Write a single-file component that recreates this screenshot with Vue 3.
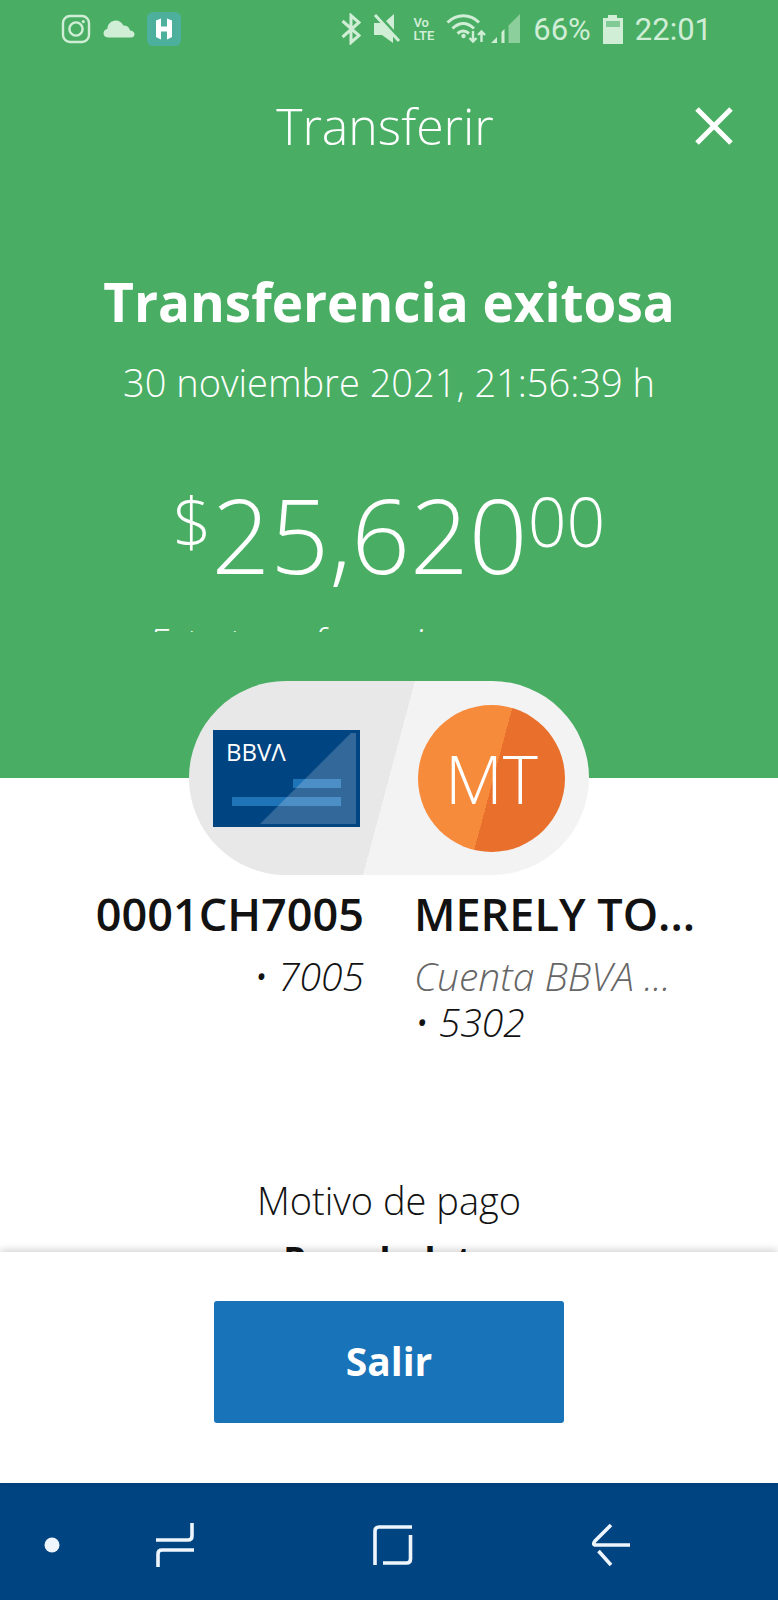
<script setup>
import { ref } from 'vue'

const transfer = ref({
  title: 'Transferencia exitosa',
  date: '30 noviembre 2021, 21:56:39 h',
  whole: '25,620',
  cents: '00',
  from: { name: '0001CH7005', account: '• 7005' },
  to: { name: 'MERELY TO...', bank: 'Cuenta BBVA ...', account: '• 5302', initials: 'MT' },
  reason: 'Pago boleto',
})
</script>

<template>
  <div class="screen">
    <div class="hero">
      <div class="status">
        <div class="status-left">
          <svg width="30" height="30" viewBox="0 0 30 30" fill="none" stroke="currentColor" stroke-width="2.400">
            <rect x="2" y="2" width="26" height="26" rx="7" />
            <circle cx="15" cy="15" r="6.600" />
            <circle cx="22.300" cy="7.600" r="1.600" fill="currentColor" stroke="none" />
          </svg>
          <svg width="32" height="20" viewBox="0 0 32 20" fill="currentColor">
            <path d="M5 18.500C2 18.500 .5 16.500 .5 14.300C.5 12 2 10.300 4.300 10C4.600 5 8.300 1.500 12.700 1.500C16.500 1.500 19 3.600 20.300 6.600C24 6 26.400 8.300 27 11.400C29.800 11.600 31.500 13 31.500 15.200C31.500 17.200 30 18.500 28 18.500Z" />
          </svg>
          <svg width="34" height="34" viewBox="0 0 34 34">
            <rect width="34" height="34" rx="6" fill="#4cb09c" />
            <path d="M9 8.500L14 6.500V14.500H20V6.500L25 8.500V25L20 27.500V19.500H14V27.500L9 25Z" fill="#fff" />
          </svg>
        </div>
        <div class="status-right">
          <svg width="20" height="32" viewBox="0 0 20 32" fill="none" stroke="currentColor" stroke-width="3">
            <path d="M1.500 8L18 22.500L10 29.500V2.500L18 9.500L1.500 24" />
          </svg>
          <svg width="28" height="32" viewBox="0 0 28 32">
            <path d="M1 10H8L20 22V30L9 22H1ZM13 8L21 1V17Z" fill="currentColor" />
            <path d="M2 2L26 28" stroke="currentColor" stroke-width="3" />
          </svg>
          <div class="volte"><span>Vo</span><span>LTE</span></div>
          <svg width="75" height="32" viewBox="0 0 75 32" fill="none" stroke="currentColor" stroke-width="3">
            <path d="M1.500 9.500C11 .5 24 .5 33 9.500M6.500 15.500C13.500 9 21 9 28 15.500M11.500 20.500C15.500 17 19 17 23 20.500" />
            <circle cx="17.500" cy="23" r="2.200" fill="currentColor" stroke="none" />
            <path d="M27 18V28M23.500 25L27 28.500L30.500 25M35.500 29V19M32 22L35.500 18.500L39 22" stroke-width="2.400" />
            <path d="M45 30L51 24V30ZM55.500 19L58.500 16V30H55.500Z" fill="currentColor" stroke="none" />
            <path d="M62.500 12.500L74 1V30H62.500Z" fill="currentColor" stroke="none" opacity=".5" />
          </svg>
          <span>66%</span>
          <svg width="20" height="30" viewBox="0 0 20 30" fill="currentColor">
            <path d="M0 4H5V1H14V4H20V30H0Z" />
            <rect x="3" y="7" width="14" height="6" fill="#82ca95" />
          </svg>
          <span>22:01</span>
        </div>
      </div>

      <header class="bar">
        <h1>Transferir</h1>
        <button class="close" aria-label="Cerrar">
          <svg width="40" height="40" viewBox="0 0 40 40" fill="none" stroke="currentColor" stroke-width="5">
            <path d="M3 3L37 37M37 3L3 37" />
          </svg>
        </button>
      </header>

      <section class="summary">
        <h2>{{ transfer.title }}</h2>
        <p class="date">{{ transfer.date }}</p>
        <p class="amount">
          <span class="small">$</span><span>{{ transfer.whole }}</span><span class="small">{{ transfer.cents }}</span>
        </p>
        <p class="note">Esta transferencia</p>
      </section>
    </div>

    <main class="details">
      <div class="pill">
        <svg width="147" height="97" viewBox="0 0 147 97">
          <rect width="147" height="97" fill="#004481" />
          <rect x="80" y="49" width="48" height="9" fill="#1f74b8" />
          <rect x="19" y="67" width="109" height="9" fill="#1f74b8" />
          <path d="M47 94L138 3H143V94Z" fill="#fff" opacity=".2" />
          <text x="13" y="31" class="brand">BBVΛ</text>
        </svg>
        <div class="avatar">{{ transfer.to.initials }}</div>
      </div>

      <div class="parties">
        <div class="party from">
          <strong>{{ transfer.from.name }}</strong>
          <em>{{ transfer.from.account }}</em>
        </div>
        <div class="party">
          <strong>{{ transfer.to.name }}</strong>
          <em class="bank">{{ transfer.to.bank }}</em>
          <em>{{ transfer.to.account }}</em>
        </div>
      </div>

      <div class="reason">
        <p>Motivo de pago</p>
        <strong>{{ transfer.reason }}</strong>
      </div>
    </main>

    <footer class="actions">
      <button class="exit">Salir</button>
    </footer>

    <nav class="nav">
      <button aria-label="Ocultar barra">
        <svg width="16" height="16" viewBox="0 0 16 16"><circle cx="8" cy="8" r="7.500" fill="currentColor" /></svg>
      </button>
      <button aria-label="Recientes">
        <svg width="38" height="44" viewBox="0 0 38 44" fill="none" stroke="currentColor" stroke-width="3.600">
          <path d="M36 0V13Q36 17 32 17H0M2 44V31Q2 27 6 27H38" />
        </svg>
      </button>
      <button aria-label="Inicio">
        <svg width="40" height="42" viewBox="0 0 40 42" fill="none" stroke="currentColor" stroke-width="3.600">
          <path d="M2 41V7Q2 3 6 3H39M37.500 11V35Q37.500 39 33.500 39H10" />
        </svg>
      </button>
      <button aria-label="Atrás">
        <svg width="38" height="44" viewBox="0 0 38 44" fill="none" stroke="currentColor" stroke-width="3.600">
          <path d="M19 2L3 18Q0 22 4 22H38M6.500 28L19 42" />
        </svg>
      </button>
    </nav>
  </div>
</template>

<style>
body {
  margin: 0;
}
</style>

<style scoped>
.screen {
  height: 100vh;
  display: flex;
  flex-direction: column;
  background: #fff;
  color: #121212;
  font-family: "Open Sans", "Noto Sans", sans-serif;
  font-weight: 350;
}
h1, h2, p {
  margin: 0;
  font-weight: inherit;
}
button {
  border: 0;
  padding: 0;
  background: none;
  color: inherit;
  font: inherit;
}
svg {
  display: block;
  flex: none;
}
.hero {
  flex: none;
  background: #49ae63;
  color: #fff;
  padding-bottom: 146px;
}
.status {
  height: 58px;
  padding: 0 66px 0 61px;
  display: flex;
  align-items: center;
  justify-content: space-between;
  color: #d0edd6;
  font-family: Roboto, sans-serif;
  font-weight: 400;
  font-size: 31px;
}
.status-left {
  display: flex;
  align-items: center;
  gap: 12px;
}
.status-right {
  display: flex;
  align-items: center;
  gap: 12px;
}
.volte {
  display: flex;
  flex-direction: column;
  font-size: 13px;
  line-height: 13px;
  font-weight: 600;
}
.bar {
  height: 136px;
  padding: 0 44px;
  display: grid;
  grid-template-columns: 32px 1fr 40px;
  align-items: center;
}
.bar h1 {
  grid-column: 2;
  text-align: center;
  font-size: 50px;
  line-height: 60px;
}
.summary {
  padding-top: 72px;
  text-align: center;
}
.summary h2 {
  font-size: 53px;
  line-height: 72px;
  font-weight: 700;
}
.date {
  padding-top: 16px;
  font-size: 38px;
  line-height: 56px;
}
.amount {
  display: flex;
  justify-content: center;
  align-items: flex-start;
  padding-top: 64px;
  font-size: 103px;
  line-height: 120px;
}
.amount .small {
  font-size: 68px;
  line-height: 94px;
}
.note {
  height: 12px;
  margin: 26px 148px 0;
  overflow: hidden;
  text-align: left;
  font-size: 38px;
  line-height: 44px;
  font-style: italic;
}
.details {
  flex: 1;
  min-height: 0;
  display: flex;
  flex-direction: column;
  align-items: center;
}
.pill {
  flex: none;
  box-sizing: border-box;
  width: 400px;
  height: 194px;
  margin-top: -97px;
  padding: 0 24px;
  display: flex;
  align-items: center;
  justify-content: space-between;
  border-radius: 97px;
  background: linear-gradient(105deg, #e8e8e8 50%, #f3f3f3 50%);
}
.brand {
  font-size: 24px;
  font-weight: 500;
  fill: #fff;
}
.avatar {
  width: 147px;
  height: 147px;
  border-radius: 50%;
  background: linear-gradient(105deg, #f78b3c 51%, #e9702c 51%);
  color: #fff;
  font-size: 67px;
  line-height: 147px;
  text-align: center;
}
.parties {
  flex: none;
  align-self: stretch;
  display: grid;
  grid-template-columns: 1fr 1fr;
  gap: 50px;
  padding: 8px 82px 0;
}
.party {
  display: flex;
  flex-direction: column;
  min-width: 0;
  font-size: 39px;
  line-height: 46px;
}
.party strong,
.party em {
  white-space: nowrap;
}
.party strong {
  padding-bottom: 8px;
  font-size: 45px;
  line-height: 62px;
  font-weight: 600;
}
.party .bank {
  color: #666;
}
.from {
  text-align: right;
}
.reason {
  flex: 1;
  min-height: 0;
  overflow: hidden;
  padding-top: 127px;
  text-align: center;
  font-size: 38px;
  line-height: 56px;
}
.reason strong {
  display: block;
  padding-top: 4px;
  font-size: 36px;
  font-weight: 700;
}
.actions {
  position: relative;
  flex: none;
  display: flex;
  justify-content: center;
  padding: 49px 0 60px;
  background: #fff;
  box-shadow: 0 -2px 8px rgba(0, 0, 0, 0.18);
}
.exit {
  width: 45%;
  height: 122px;
  padding-bottom: 4px;
  border-radius: 3px;
  background: #1973b8;
  color: #fff;
  font-size: 39px;
  font-weight: 700;
}
.nav {
  flex: none;
  height: 117px;
  padding: 6px 148px 0 44px;
  box-sizing: border-box;
  display: flex;
  align-items: center;
  background: #004481;
  color: #eef5fc;
}
.nav button:nth-child(2) {
  margin-left: 96px;
}
.nav button:nth-child(3) {
  margin: 0 auto;
}
</style>
